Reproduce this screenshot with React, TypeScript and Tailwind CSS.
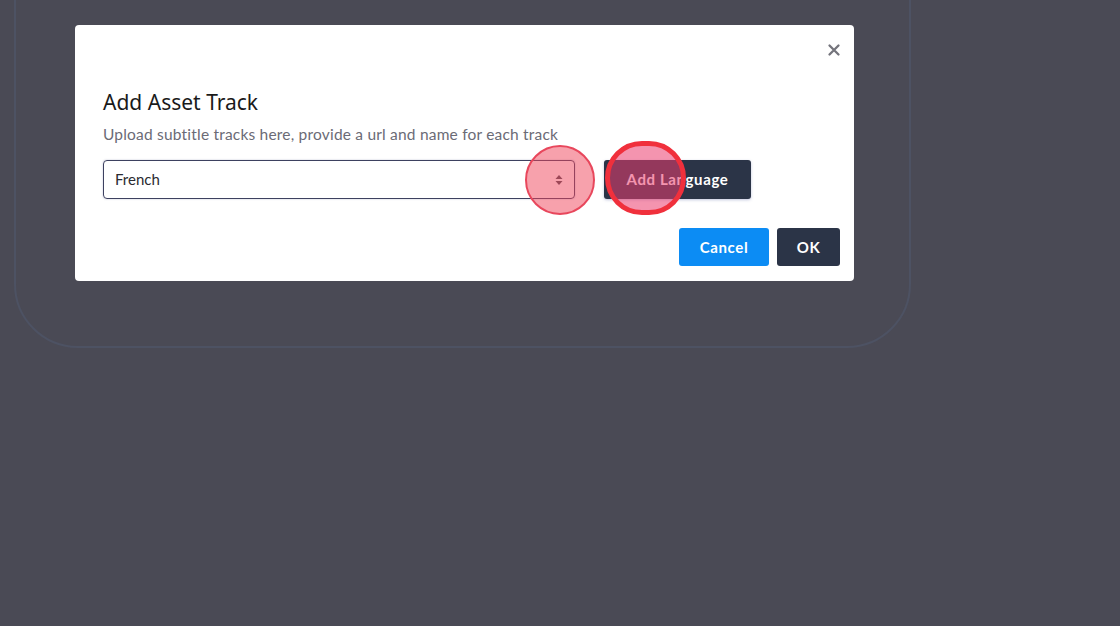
import React from "react";

export default function App() {
  return (
    <div className="relative w-[1120px] h-[626px] overflow-hidden bg-[#4a4a55]" style={{ fontFamily: "Lato, 'Open Sans', sans-serif" }}>
      {/* underlying page outline */}
      <div className="absolute left-[14px] top-[-80px] w-[897px] h-[428px] rounded-[64px] border-2 border-[#4d5263]" />

      {/* modal */}
      <div className="absolute left-[75px] top-[25px] w-[779px] h-[256px] rounded-[4px] bg-white pl-[28px] pr-[14px] pb-[15px] flex flex-col">
        <div className="flex justify-end h-[50px] pt-[17px] -mr-[2px]">
          <svg width="16" height="16" viewBox="0 0 16 16" className="text-[#74747c]">
            <path d="M3.5 3.5 L12.5 12.5 M12.5 3.5 L3.5 12.5" stroke="currentColor" strokeWidth="2.3" strokeLinecap="round" />
          </svg>
        </div>
        <h2 className="mt-[13px] text-[21px] leading-[28px] text-[#1a1a1a]" style={{ fontFamily: "'Noto Sans', 'Open Sans', sans-serif" }}>
          Add Asset Track
        </h2>
        <p className="mt-[8px] text-[15.5px] leading-[20px] text-[#6b6b76] tracking-[0.2px]">
          Upload subtitle tracks here, provide a url and name for each track
        </p>
        <div className="mt-[16px] flex items-center">
          <div className="w-[472px] h-[39px] rounded-[4px] border border-[#3d4160] shadow-[0_0_2px_rgba(60,65,120,0.35)] flex items-center justify-between pl-[11px] pr-[11px] text-[15px] text-[#2a2a30]">
            <span>French</span>
            <svg width="8" height="12" viewBox="0 0 8 12">
              <path d="M4 1 L7.5 5 H0.5 Z M4 11 L7.5 7 H0.5 Z" fill="#4a4a55" />
            </svg>
          </div>
          <button className="ml-[29px] w-[147px] h-[39px] rounded-[3px] bg-[#2b3447] text-white text-[15px] font-bold tracking-[0.6px] shadow-[0_1px_3px_rgba(80,90,160,0.35)]">
            Add Language
          </button>
        </div>
        <div className="mt-auto flex justify-end gap-[8px]">
          <button className="w-[90px] h-[38px] rounded-[3px] bg-[#0c8cf4] text-white text-[15px] font-bold tracking-[0.6px]">
            Cancel
          </button>
          <button className="w-[63px] h-[38px] rounded-[3px] bg-[#2b3447] text-white text-[15px] font-bold tracking-[0.6px]">
            OK
          </button>
        </div>
      </div>

      {/* click highlight overlays */}
      <div className="absolute left-[525px] top-[145px] w-[70px] h-[70px] rounded-full border-2 border-[#e8475c] bg-[rgba(239,68,90,0.5)]" />
      <div className="absolute left-[605px] top-[141px] w-[81px] h-[74px] rounded-full border-[5px] border-[#f0303c] bg-[rgba(235,60,110,0.55)]" />
    </div>
  );
}
